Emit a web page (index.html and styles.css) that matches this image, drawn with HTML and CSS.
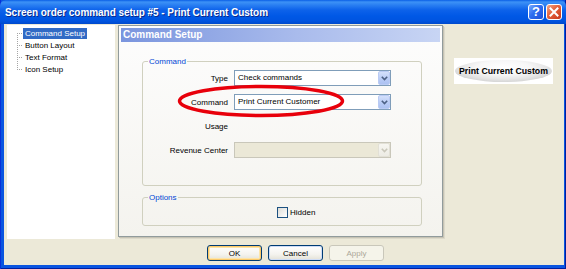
FILE: index.html
```html
<!DOCTYPE html>
<html>
<head>
<meta charset="utf-8">
<link rel="stylesheet" href="styles.css">
</head>
<body>
<div class="window">
  <div class="titlebar">
    <span class="title">Screen order command setup #5 - Print Current Custom</span>
    <div class="tb-buttons">
      <span class="tb-btn help">?</span>
      <span class="tb-btn close"><svg width="10" height="10" viewBox="0 0 10 10"><path d="M1.5 1.5 L8.5 8.5 M8.5 1.5 L1.5 8.5" stroke="#fff" stroke-width="2" stroke-linecap="square"/></svg></span>
    </div>
  </div>
  <div class="client">
    <div class="main">
      <ul class="tree">
        <li class="first"><span class="sel">Command Setup</span></li>
        <li><span>Button Layout</span></li>
        <li><span>Text Format</span></li>
        <li class="last"><span>Icon Setup</span></li>
      </ul>
      <div class="panel">
        <div class="panel-head">Command Setup</div>
        <fieldset class="group">
          <legend>Command</legend>
          <div class="form">
            <span class="lbl">Type</span>
            <div class="select"><span class="sel-text">Check commands</span><span class="sel-btn"><svg width="7" height="5" viewBox="0 0 7 5"><path d="M0.8 0.8 L3.5 3.6 L6.2 0.8" fill="none" stroke="#4d6185" stroke-width="1.6"/></svg></span></div>
            <span class="lbl">Command</span>
            <div class="select"><span class="sel-text">Print Current Customer</span><span class="sel-btn"><svg width="7" height="5" viewBox="0 0 7 5"><path d="M0.8 0.8 L3.5 3.6 L6.2 0.8" fill="none" stroke="#4d6185" stroke-width="1.6"/></svg></span></div>
            <span class="lbl">Usage</span>
            <span></span>
            <span class="lbl">Revenue Center</span>
            <div class="select disabled"><span class="sel-text"></span><span class="sel-btn"><svg width="7" height="5" viewBox="0 0 7 5"><path d="M0.8 0.8 L3.5 3.6 L6.2 0.8" fill="none" stroke="#c9c7ba" stroke-width="1.6"/></svg></span></div>
          </div>
        </fieldset>
        <fieldset class="group opts">
          <legend>Options</legend>
          <label class="check"><span class="box"></span><span>Hidden</span></label>
        </fieldset>
      </div>
      <div class="preview"><div class="pill">Print Current Custom</div></div>
    </div>
    <div class="buttons">
      <span class="btn default">OK</span>
      <span class="btn">Cancel</span>
      <span class="btn off">Apply</span>
    </div>
    <svg class="mark" width="170" height="36" viewBox="0 0 170 36"><ellipse cx="85" cy="17" rx="81.5" ry="14.5" fill="none" stroke="#e8000b" stroke-width="3.5"/></svg>
  </div>
</div>
</body>
</html>
```

FILE: styles.css
```css
* { box-sizing: border-box; margin: 0; padding: 0; }
html, body { width: 566px; height: 269px; overflow: hidden; }
body { font-family: "Liberation Sans", Arial, sans-serif; font-size: 8px; color: #000; background: #0a53de; }

.window {
  width: 566px; height: 269px;
  display: flex; flex-direction: column;
  background: #0a55e0;
  box-shadow: inset 1px 0 #0831d9, inset -1px 0 #001ea0, inset 0 -1px #001ea0;
}

.titlebar {
  height: 24px; flex: none;
  display: flex; align-items: center;
  padding-left: 5px;
  color: #fff;
  background: linear-gradient(to bottom, #0a5fe6 0, #3d92f6 2px, #2a7ff2 5px, #0d62ea 10px, #0058e6 16px, #0054e0 21px, #0049cc 24px);
  border-radius: 6px 6px 0 0;
}
.title { flex: 1; font-weight: bold; font-size: 10px; letter-spacing: -0.05px; text-shadow: 1px 1px 0 #0a2a8c; padding-top: 1px; }
.tb-buttons { display: flex; gap: 2px; margin-right: 4px; align-self: flex-start; margin-top: 4px; }
.tb-btn {
  width: 16px; height: 16px; border: 1px solid #fff; border-radius: 3px;
  display: flex; align-items: center; justify-content: center;
  color: #fff; font-weight: bold; font-size: 13px; line-height: 14px;
}
.help { background: linear-gradient(135deg, #77aaff 0%, #2e6df0 45%, #1d4fd6 100%); }
.close { background: linear-gradient(135deg, #f4a787 0%, #e3603a 45%, #c8381c 100%); }

.client {
  flex: 1; margin: 0 2px 4px 4px;
  background: #ece9d8;
  position: relative;
  display: flex; flex-direction: column;
}
.main { display: flex; align-items: flex-start; padding: 1px 0 0 3px; }

.tree { list-style: none; width: 108px; height: 214px; background: #fff; padding: 2px 0 0 10px; }
.tree li { display: flex; height: 12px; align-items: center; }
.tree li::before {
  content: ""; width: 6px; height: 12px; flex: none;
  background-image:
    repeating-linear-gradient(to right, #a5a5a5 0 1px, transparent 1px 2px),
    repeating-linear-gradient(to bottom, #a5a5a5 0 1px, transparent 1px 2px);
  background-repeat: no-repeat;
  background-size: 6px 1px, 1px 12px;
  background-position: 0 6px, 0 0;
}
.tree li.first::before { background-size: 6px 1px, 1px 6px; background-position: 0 6px, 0 6px; }
.tree li.last::before { background-size: 6px 1px, 1px 7px; background-position: 0 6px, 0 0; }
.tree li span { padding: 0 2px; line-height: 11px; }
.tree li span.sel { background: #316ac5; color: #fff; }

.panel {
  width: 325px; height: 212px; margin-left: 3px; flex: none;
  border: 1px solid #919b9c;
  background: linear-gradient(to bottom, #fdfdfd, #f4f3ee);
  box-shadow: 1px 1px 0 #c6c3b4, 2px 2px 0 #dcd9ca;
}
.panel-head {
  height: 14px; margin: 2px 2px 0;
  background: linear-gradient(to right, #7a95de 0%, #a9bbec 55%, #c8d5f4 100%);
  color: #fff; font-weight: bold; font-size: 10px; line-height: 14px; padding-left: 2px;
}

.group {
  margin: 14px 20px 0 23px;
  border: 1px solid #d0d0bf; border-radius: 3px;
  padding: 3px 0 27px;
}
.group legend { margin-left: 5px; padding: 0 1px; color: #0046d5; line-height: 11px; font-size: 8px; }

.form {
  display: grid;
  grid-template-columns: 85px 157px;
  grid-auto-rows: 16px;
  column-gap: 6px; row-gap: 8px;
  align-items: center;
}
.lbl { text-align: right; }

.select {
  height: 16px; display: flex; align-items: stretch;
  border: 1px solid #7f9db9; background: #fff;
}
.sel-text { flex: 1; padding-left: 3px; line-height: 14px; }
.sel-btn {
  width: 12px; margin: 0; flex: none;
  display: flex; align-items: center; justify-content: center;
  border: 1px solid #bacbf4; border-radius: 2px;
  background: linear-gradient(to bottom, #d4e0fb, #b8cbf5 60%, #adc2f2);
}
.select.disabled { border-color: #c9c7ba; background: #ebe8d7; }
.select.disabled .sel-btn { border-color: #e2e0d6; background: linear-gradient(to bottom, #f7f6f1, #ecebe4); }

.opts { margin-top: 6px; padding: 4px 0 7px 0; }
.check { display: flex; align-items: center; gap: 2px; height: 11px; margin-left: 134px; }
.box {
  width: 11px; height: 11px; border: 1px solid #1c5180;
  background: linear-gradient(135deg, #dcdcd7, #fff);
}

.preview { width: 99px; height: 26px; margin: 33px 0 0 11px; background: #fff; padding: 2px 1px; }
.pill {
  height: 22px; border-radius: 50%;
  background: radial-gradient(ellipse 55% 65% at 50% 35%, #ffffff 0%, #f7f7f7 50%, #e6e6e6 80%, #d6d6d6 100%);
  display: flex; align-items: center; justify-content: center;
  font-weight: bold; font-size: 8.75px; white-space: nowrap;
}

.buttons { display: flex; gap: 6px; padding-left: 203px; margin-top: 6px; }
.btn {
  width: 55px; height: 16px;
  border: 1px solid #003c74; border-radius: 3px;
  background: linear-gradient(to bottom, #ffffff 0%, #f4f3ee 60%, #e3e1d6 100%);
  display: flex; align-items: center; justify-content: center;
  box-shadow: inset 0 0 0 1px #cedcf6;
}
.btn.default { box-shadow: inset 0 0 0 1px #fbc96a, inset 0 0 0 2px #fde5a9; }
.btn.off { border-color: #c9c7ba; color: #aca899; background: #f5f4ea; box-shadow: none; }

.mark { position: absolute; left: 172px; top: 60px; }
```
